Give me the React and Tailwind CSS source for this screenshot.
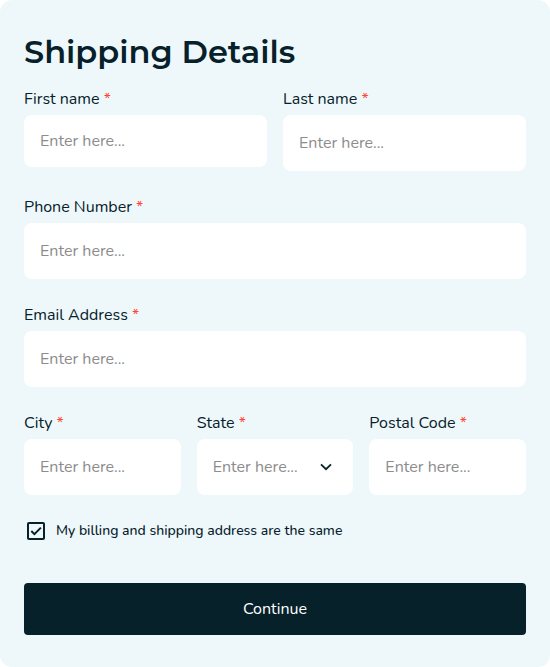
import { useId, useState } from "react";

function Field({ label, children }) {
  const id = useId();
  return (
    <div className="flex min-w-0 flex-1 flex-col gap-1">
      <label htmlFor={id} className="text-base leading-6 text-[#07212a]">
        {label} <span className="text-[#ff4733]">*</span>
      </label>
      {children(id)}
    </div>
  );
}

function TextField({ label, type = "text", compact = false }) {
  return (
    <Field label={label}>
      {(id) => (
        <input
          id={id}
          type={type}
          required
          placeholder="Enter here..."
          className={`${compact ? "h-[52px]" : "h-14"} w-full rounded-lg bg-white px-4 text-base text-[#07212a] outline-none placeholder:text-[#8c8c8c] focus:ring-2 focus:ring-[#07212a]`}
        />
      )}
    </Field>
  );
}

function StateField() {
  return (
    <Field label="State">
      {(id) => (
        <div className="relative">
          <select
            id={id}
            required
            defaultValue=""
            className="h-14 w-full appearance-none rounded-lg bg-white pr-10 pl-4 text-base text-[#8c8c8c] outline-none focus:ring-2 focus:ring-[#07212a]"
          >
            <option value="">Enter here...</option>
            <option value="CA">California</option>
            <option value="NY">New York</option>
            <option value="TX">Texas</option>
          </select>
          <svg
            viewBox="0 0 24 24"
            className="pointer-events-none absolute top-4 right-4 size-6"
            fill="none"
            stroke="#07212a"
            strokeWidth="1.8"
            aria-hidden="true"
          >
            <path d="M8 9.4 13 14.2 18 9.4" />
          </svg>
        </div>
      )}
    </Field>
  );
}

export default function App() {
  const [same, setSame] = useState(true);
  return (
    <form
      onSubmit={(e) => e.preventDefault()}
      className="rounded-xl bg-[#eef8fb] px-6 py-8 font-['Nunito','Lato',sans-serif] text-[#07212a]"
    >
      <h1 className="mb-4 font-['Montserrat','Inter',sans-serif] text-[32px] leading-[39px] font-semibold">
        Shipping Details
      </h1>
      <div className="flex flex-col gap-6">
        <div className="flex items-start gap-4">
          <TextField label="First name" compact />
          <TextField label="Last name" />
        </div>
        <TextField label="Phone Number" type="tel" />
        <TextField label="Email Address" type="email" />
        <div className="flex gap-4">
          <TextField label="City" />
          <StateField />
          <TextField label="Postal Code" />
        </div>
        <label className="flex items-center gap-2 text-sm leading-6 font-medium">
          <span className="relative flex size-6 items-center justify-center">
            <input
              type="checkbox"
              checked={same}
              onChange={(e) => setSame(e.target.checked)}
              className="peer size-[18px] appearance-none rounded-xs border-2 border-[#07212a]"
            />
            <svg
              viewBox="0 0 24 24"
              className="pointer-events-none invisible absolute inset-0 peer-checked:visible"
              fill="none"
              stroke="#07212a"
              strokeWidth="2"
              aria-hidden="true"
            >
              <path d="M7.3 12 10.4 15.1 16.9 8.6" />
            </svg>
          </span>
          My billing and shipping address are the same
        </label>
      </div>
      <button
        type="submit"
        className="mt-10 h-[52px] w-full rounded-sm bg-[#07212a] text-base text-white"
      >
        Continue
      </button>
    </form>
  );
}
